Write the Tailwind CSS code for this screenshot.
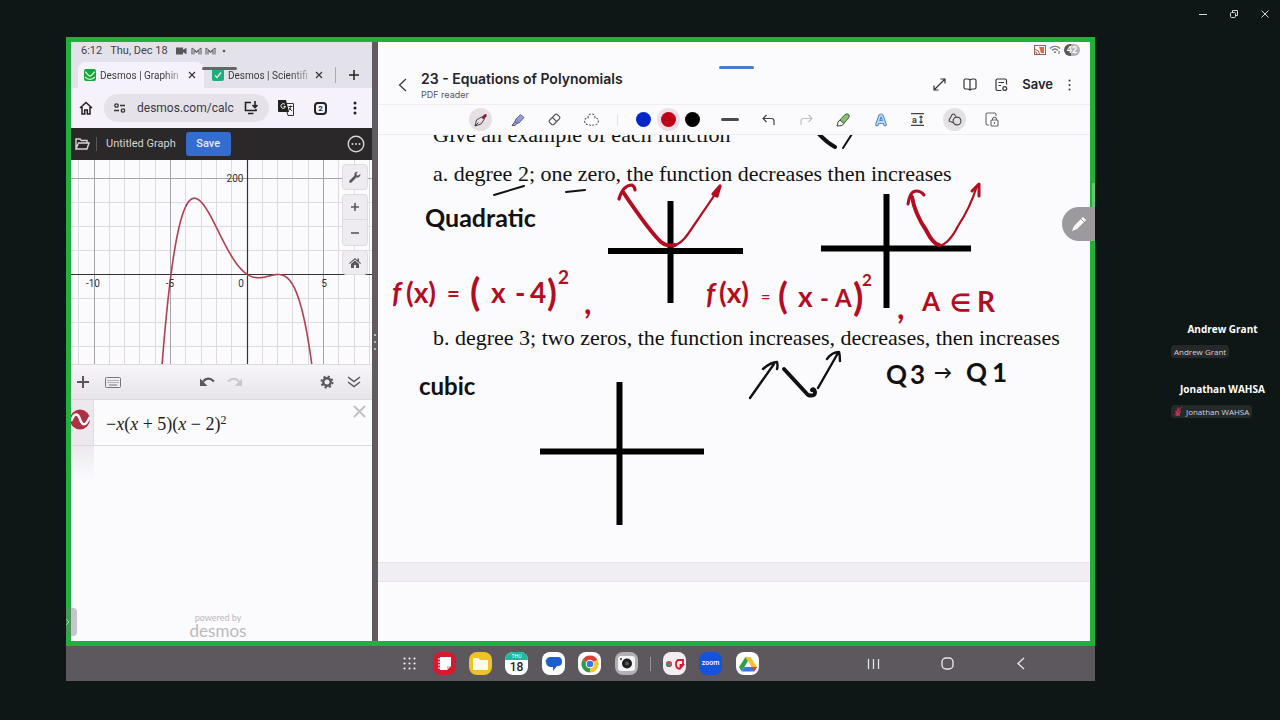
<!DOCTYPE html>
<html lang="en">
<head>
<meta charset="utf-8">
<meta name="viewport" content="width=device-width, initial-scale=1">
<title>Shared screen - Equations of Polynomials</title>
<script src="https://cdn.jsdelivr.net/npm/@tailwindcss/browser@4"></script>
</head>
<body class="min-h-screen flex flex-col bg-[#0f1616] font-['Roboto',sans-serif]">
<header class="h-[37px] shrink-0 flex justify-end text-gray-300">
  <button aria-label="Minimise" class="w-[31px] h-[27px] grid place-items-center"><svg width="10" height="10" fill="none" stroke="currentColor"><path d="M1 5.5h8"/></svg></button>
  <button aria-label="Restore" class="w-[31px] h-[27px] grid place-items-center"><svg width="10" height="10" fill="none" stroke="currentColor"><rect x="1.5" y="3.5" width="5" height="5" rx="1"/><path d="M3.5 3.500V1.500h5v5H7"/></svg></button>
  <button aria-label="Close" class="w-[31px] h-[27px] grid place-items-center"><svg width="10" height="10" fill="none" stroke="currentColor"><path d="M1.500 1.500l7 7M8.500 1.500l-7 7"/></svg></button>
</header>

<div class="grow flex pb-[39px]">
<main class="grow min-w-0 ml-[66px] flex flex-col">
  <div class="relative grow flex border-[5px] border-[#20b13c] bg-[#5f5b60]">

    <!-- Browser pane -->
    <section class="flex-[301] min-w-0 flex flex-col bg-[#fbfafd] overflow-hidden">
      <div class="bg-[#e3e2ea] relative">
        <div class="h-5 flex items-center pl-[10px] pb-[2px] text-[11px] text-[#444348] gap-2">
          <span>6:12</span><span>Thu, Dec 18</span>
          <svg width="54" height="10" viewBox="0 0 54 10" fill="none" stroke="#57565b"><path d="M0 1.500h7v2.300l3.500-2v6.500l-3.500-2v2.200H0z" fill="#57565b" stroke="none"/><path d="M16 8.500V2l4.500 3.500L25 2v6.500M18 8.500V4.500l2.500 2 2.500-2v4M30 8.500V2l4.500 3.500L39 2v6.500M32 8.500V4.500l2.500 2 2.500-2v4" stroke-width="1"/><circle cx="48" cy="5" r="1.300" fill="#57565b" stroke="none"/></svg>
        </div>
        <div class="h-[26px] flex text-[10px] text-[#35343a]">
          <div class="flex-[130] min-w-0 ml-[7px] flex items-center rounded-t-lg bg-[#f5f2fb] pl-[6px] pr-1">
            <svg class="shrink-0" width="12" height="12"><rect width="12" height="12" rx="2" fill="#18a637"/><path d="M1 3c2 0 2 4 5 4s3-4 5-4M1 8c3 3 7 3 10 0" stroke="#c8f5cf" stroke-width="1.300" fill="none"/></svg>
            <span class="ml-1 grow whitespace-nowrap bg-linear-to-r from-[#35343a] from-75% to-[#d5d2da] bg-clip-text text-transparent">Desmos | Graphin</span>
            <button aria-label="Close tab" class="w-4 h-4 shrink-0 grid place-items-center"><svg width="8" height="8" stroke="#35343a" stroke-width="1.200"><path d="M1 1l6 6M7 1l-6 6"/></svg></button>
          </div>
          <div class="flex-[129] min-w-0 flex items-center pl-2 pr-1">
            <svg class="shrink-0" width="12" height="12"><rect width="12" height="12" rx="2" fill="#1fae79"/><path d="M3 6.500l2 2 4-5" stroke="#d6f5e8" stroke-width="1.300" fill="none"/></svg>
            <span class="ml-1 grow whitespace-nowrap bg-linear-to-r from-[#35343a] from-75% to-[#c5c4cc] bg-clip-text text-transparent">Desmos | Scientifi</span>
            <button aria-label="Close tab" class="w-4 h-4 shrink-0 grid place-items-center"><svg width="8" height="8" stroke="#35343a" stroke-width="1.200"><path d="M1 1l6 6M7 1l-6 6"/></svg></button>
          </div>
          <div class="w-px h-4 my-auto ml-1 bg-[#aaa9b0]"></div>
          <button aria-label="New tab" class="w-[36px] grid place-items-center"><svg width="10" height="10" stroke="#222" stroke-width="1.500"><path d="M5 0v10M0 5h10"/></svg></button>
        </div>
        <div class="absolute left-[131px] top-[25px] w-[35px] h-[3px] rounded bg-[#66646a]"></div>
      </div>
      <div class="h-10 shrink-0 flex items-center bg-[#f5f2fb] pl-2 pr-2">
        <button aria-label="Home"><svg width="14" height="14" fill="none" stroke="#222" stroke-width="1.500"><path d="M1 7l6-5.500L13 7M3 6v7h2.700V9h2.600v4H11V6"/></svg></button>
        <div class="grow ml-[11px] h-7 rounded-full bg-[#e5e2ea] flex items-center pl-[10px] pr-[10px]">
          <svg class="shrink-0" width="12" height="10" fill="none" stroke="#333" stroke-width="1.300"><circle cx="2.500" cy="2.500" r="1.700"/><path d="M6 2.500h5M0 7.500h5"/><circle cx="9" cy="7.500" r="1.700"/></svg>
          <label for="url" class="sr-only">Address</label>
          <input id="url" value="desmos.com/calc" class="ml-[11px] grow w-0 min-w-0 bg-transparent text-[12px] text-[#3b3a40] outline-none">
          <svg class="shrink-0" width="15" height="14" fill="none" stroke="#222" stroke-width="1.600"><path d="M7 1.500H1.500v8H12V8M4 12.500h5.500M11 0v6M8.500 4l2.500 2.500L13.500 4"/></svg>
        </div>
        <button aria-label="Translate" class="ml-[9px]"><svg width="16" height="16"><path d="M0 0h8l3 12H1a1 1 0 0 1-1-1z" fill="#222"/><path d="M8.500 3.500H15.500v12H10l-1-3.500" fill="none" stroke="#333"/><path d="M7 4.500a2.300 2.300 0 1 0 .5 2H5.500" stroke="#fff" fill="none"/><path d="M10.500 6.500h4M12.500 5.500v1c0 2-1 3.500-2 4M11 8l3 3" stroke="#333" fill="none"/></svg></button>
        <button aria-label="Tabs open" class="ml-5 size-[13px] shrink-0 rounded-[4px] border-2 border-[#222] text-[8px] leading-[9px] font-bold text-[#222]">2</button>
        <button aria-label="Browser menu" class="ml-[26px] mr-[7px]"><svg width="4" height="14" fill="#222"><circle cx="2" cy="2" r="1.500"/><circle cx="2" cy="7" r="1.500"/><circle cx="2" cy="12" r="1.500"/></svg></button>
      </div>
      <div class="h-8 shrink-0 flex items-center bg-[#2a2829] pl-1 pr-[7px] text-[#d5d4d8]">
        <button aria-label="Open graph"><svg width="15" height="12" fill="none" stroke="#d5d4d8" stroke-width="1.400"><path d="M1 11V1h4l1.500 1.500H12V5M1 11l2.500-6H14l-2 6z"/></svg></button>
        <div class="w-px h-[14px] bg-[#5c5a5d] ml-[6px]"></div>
        <h2 class="ml-[9px] text-[11px] whitespace-nowrap">Untitled Graph</h2>
        <button class="ml-[10px] w-[45px] h-6 rounded-[3px] bg-[#356ccf] text-[11px] font-medium text-[#e6edfa]">Save</button>
        <button aria-label="More" class="ml-auto"><svg width="18" height="18" fill="none" stroke="#d5d4d8" stroke-width="1.400"><circle cx="9" cy="9" r="7.800"/><g fill="#d5d4d8" stroke="none"><circle cx="5.500" cy="9" r="1"/><circle cx="9" cy="9" r="1"/><circle cx="12.500" cy="9" r="1"/></g></svg></button>
      </div>
      <div class="relative shrink-0">
        <svg class="block w-full" viewBox="0 0 301 204" role="img" aria-label="Graph of the quartic">
          <path id="minor" stroke="#dddbe0" fill="none"/>
          <path id="major" stroke="#a5a3a9" fill="none"/>
          <path d="M0 114.500H301M176.500 0V204" stroke="#333" stroke-width="1.200"/>
          <path id="curve" stroke="#b0404d" stroke-width="1.600" fill="none"/>
          <g font-family="Roboto" font-size="10" fill="#333" text-anchor="middle"><text x="164" y="22">200</text><text x="22" y="127">-10</text><text x="99" y="127">-5</text><text x="170" y="127">0</text><text x="253" y="127">5</text></g>
        </svg>
        <div class="absolute right-1 top-1 w-[26px] flex flex-col gap-1 text-[#59585c]">
          <button aria-label="Graph settings" class="h-[26px] rounded border border-[#dddbe0] bg-[#eeecf0] grid place-items-center"><svg width="12" height="12" viewBox="0 0 12 12"><path d="M1.500 10.500l5-5" stroke="#59585c" stroke-width="2.600" stroke-linecap="round"/><path d="M11.300 2.800L9.300 4.500 7.600 4.200 7.400 2.600 9.200.8C7.300.2 5.200 1.500 5.300 3.600c0 2.100 2 3.400 3.800 2.900 1.700-.4 2.700-2 2.200-3.700z" fill="#59585c"/></svg></button>
          <div class="rounded border border-[#dddbe0] bg-[#eeecf0] flex flex-col">
            <button aria-label="Zoom in" class="h-[25px] grid place-items-center border-b border-[#dddbe0]"><svg width="8" height="8" stroke="#59585c" stroke-width="1.600"><path d="M4 0v8M0 4h8"/></svg></button>
            <button aria-label="Zoom out" class="h-[25px] grid place-items-center"><svg width="8" height="8" stroke="#59585c" stroke-width="1.600"><path d="M0 4h8"/></svg></button>
          </div>
          <button aria-label="Default view" class="h-[25px] rounded border border-[#dddbe0] bg-[#eeecf0] grid place-items-center"><svg width="12" height="10" fill="#59585c"><path d="M6 0l2.500 2.200V.5H10v3L12 5.300l-.7.800L6 1.500.700 6.100 0 5.300zM6 2.500L10 6v4H7V7H5v3H2V6z"/></svg></button>
        </div>
      </div>
      <div class="h-9 shrink-0 flex items-center border-t border-b border-[#dddbe0] bg-linear-to-b from-[#f7f5f9] to-[#e6e4e8] pl-[6px] pr-[11px]">
        <button aria-label="Add item"><svg width="12" height="12" stroke="#59585c" stroke-width="2"><path d="M6 0v12M0 6h12"/></svg></button>
        <button aria-label="Keyboard" class="ml-4"><svg width="16" height="11" fill="none" stroke="#77757b"><rect x=".5" y=".5" width="15" height="10" rx="1"/><path d="M2.500 3.500h11M2.500 5.500h11" stroke-dasharray="1 1"/><path d="M4 8h8"/></svg></button>
        <button aria-label="Undo" class="ml-auto"><svg width="16" height="10"><path d="M15 4.500C11 .5 7 1 4 4.500" fill="none" stroke="#59585c" stroke-width="2.200"/><path d="M1 1.500V9h7.500z" fill="#59585c"/></svg></button>
        <button aria-label="Redo" class="ml-3"><svg width="16" height="10"><path d="M1 4.500C5 .5 9 1 12 4.500" fill="none" stroke="#cac8cd" stroke-width="2"/><path d="M15 1.500V9H7.500z" fill="#cac8cd"/></svg></button>
        <button aria-label="Edit list" class="ml-auto"><svg width="14" height="14" fill="none" stroke="#59585c"><circle cx="7" cy="7" r="3.700" stroke-width="2.400"/><circle cx="7" cy="7" r="5.500" stroke-width="2" stroke-dasharray="2.160 2.160"/></svg></button>
        <button aria-label="Hide list" class="ml-[13px]"><svg width="14" height="12" fill="none" stroke="#59585c" stroke-width="1.500"><path d="M1 1l6 4.500L13 1M1 6l6 4.500L13 6"/></svg></button>
      </div>
      <div class="h-[46px] shrink-0 flex border-b border-[#dddbe0]">
        <div class="w-[23px] shrink-0 bg-[#ebe9ed] border-r border-[#e0dee3] pt-[9px]">
          <svg width="20" height="21"><circle cx="9" cy="10.500" r="10" fill="#b02f42"/><path d="M0 12C2 8 3 5 5.500 5.500S8.500 9 9.500 11.500 12 16 14 15 17 11 19 8" stroke="#fff" stroke-width="2.400" fill="none"/></svg>
        </div>
        <p class="pl-3 pt-3 grow font-['Liberation_Serif',serif] text-[18px] leading-6 text-[#222] whitespace-nowrap">−<i>x</i>(<i>x</i> + 5)(<i>x</i> − 2)<sup class="text-[12px]">2</sup></p>
        <button aria-label="Delete expression" class="self-start mt-[5px] mr-[6px]"><svg width="13" height="13" stroke="#c2c0c5" stroke-width="2"><path d="M1 1l11 11M12 1L1 12"/></svg></button>
      </div>
      <div class="relative grow flex flex-col">
        <div class="w-[23px] h-[34px] bg-linear-to-b from-[#ebe9ed] to-[#fbfafd]"></div>
        <div class="mt-auto pr-[7px] pb-[2px] flex flex-col items-center text-[#bbb9be] font-['Lato',sans-serif]">
          <span class="text-[9px] leading-[9px]">powered by</span><span class="text-[17px] leading-[17px]">desmos</span>
        </div>
      </div>
    </section>

    <div class="w-[6px] shrink-0 flex flex-col justify-center items-center gap-[5px]">
      <i class="size-[2px] bg-gray-300 rounded-full"></i><i class="size-[2px] bg-gray-300 rounded-full"></i><i class="size-[2px] bg-gray-300 rounded-full"></i>
    </div>

    <!-- PDF reader pane -->
    <section class="flex-[712] min-w-0 flex flex-col bg-[#fbfafd] overflow-hidden">
      <div class="h-[28px] shrink-0 relative flex justify-end pt-[2px] pr-[10px]">
        <div class="absolute left-1/2 -ml-[15px] top-[24px] w-[35px] h-[3px] rounded bg-[#4c78cf]"></div>
        <div class="flex h-3 items-center gap-[3px]">
          <svg width="12" height="10" fill="none"><rect x=".5" y=".5" width="11" height="9" stroke="#a05e50"/><path d="M5 2h5v6H7z" fill="#dc6a48"/><path d="M1 4.500a5 5 0 0 1 4.500 4.500M1 7a2 2 0 0 1 2 2" stroke="#a05e50"/></svg>
          <svg width="12" height="10" fill="none" stroke="#77757b" stroke-width="1.200"><path d="M1 3.500c3-3 7-3 10 0M3 5.500c2-2 4-2 6 0M5 7.500q1-1 2 0M10 6v3"/></svg>
          <span class="w-[16px] h-3 rounded-full bg-linear-to-r from-[#59585c] from-45% to-[#b5b3b8] to-45% text-white text-[9px] leading-3 font-bold text-center">42</span>
        </div>
      </div>
      <div class="h-[35px] shrink-0 flex items-center border-b border-[#efedf2] pl-5 pr-[19px] pb-[5px] text-[#252429]">
        <button aria-label="Back" class="w-[10px]"><svg width="9" height="14" fill="none" stroke="#333" stroke-width="1.200"><path d="M8 1L1.500 7 8 13"/></svg></button>
        <div class="ml-[13px] pt-1 grow">
          <h1 class="font-['Inter',sans-serif] text-[14px] leading-4 font-semibold">23 - Equations of Polynomials</h1>
          <p class="font-['Inter',sans-serif] text-[9px] leading-4 text-[#55545a]">PDF reader</p>
        </div>
        <div class="flex items-center">
          <button aria-label="Full screen"><svg width="13" height="13" fill="none" stroke="#333" stroke-width="1.200"><path d="M1 12L12 1M7.500 1H12v4.500M1 7.500V12h4.500"/></svg></button>
          <button aria-label="Page view" class="ml-[17px]"><svg width="14" height="13" fill="none" stroke="#333" stroke-width="1.200"><path d="M7 2v9.500M7 2Q6 1 4 1H2.500Q1 1 1 2.500v7Q1 11 2.500 11H4q2 0 3 1 1-1 3-1h1.500Q13 11 13 9.500v-7Q13 1 11.500 1H10Q8 1 7 2z"/></svg></button>
          <button aria-label="Page settings" class="ml-[18px]"><svg width="13" height="14" fill="none" stroke="#333" stroke-width="1.200"><path d="M11.500 6.500v-4Q11.500 1 10 1H2.500Q1 1 1 2.500v8Q1 12.500 2.500 12.500h4M3.500 4.500H9M3.500 7.500H6"/><circle cx="9.800" cy="10.500" r="1.900"/></svg></button>
          <button class="ml-[14px] font-['Inter',sans-serif] text-[13px] font-semibold">Save</button>
          <button aria-label="More options" class="ml-[15px]"><svg width="3" height="12" fill="#333"><circle cx="1.500" cy="1.500" r="1"/><circle cx="1.500" cy="6" r="1"/><circle cx="1.500" cy="10.500" r="1"/></svg></button>
        </div>
      </div>
      <div class="h-[30px] shrink-0 flex items-center justify-center pl-1 border-b border-[#efedf2]">
        <button aria-label="Pen" class="w-[37px] grid place-items-center"><span class="size-[23px] rounded-full bg-[#e6e0e5] grid place-items-center"><svg width="14" height="14" viewBox="0 0 14 14"><path d="M7.500 4l3-2.600q2.500-1 2.200 1.600L10 6.500z" fill="#8c1930"/><path d="M1 13l1.500-6L7.500 4 10 6.500 7 11zM1 13l3.500-3.500" fill="none" stroke="#444"/></svg></span></button>
        <button aria-label="Highlighter" class="w-[37px] grid place-items-center"><svg width="14" height="14"><path d="M5 6l4.500-4.500 3.500 3L8.500 9.500z" fill="#929bdb" stroke="#666b96"/><path d="M5 6L4 8.500 6 10.500l2.500-1M4 8.500L1 12.500h3l2-2" fill="#8ba0d8" stroke="#555"/></svg></button>
        <button aria-label="Eraser" class="w-[37px] grid place-items-center"><svg width="13" height="13" fill="none" stroke="#55545a" stroke-width="1.100"><rect x="1" y="3.500" width="11" height="6" rx="1.800" transform="rotate(-45 6.500 6.500)"/><path d="M4.500 4.500l4 4"/></svg></button>
        <button aria-label="Lasso" class="w-[37px] grid place-items-center"><svg width="15" height="14" fill="none" stroke="#55545a" stroke-width="1.100" stroke-dasharray="2 1.300"><path d="M4 5q0-4 3.500-4T11 5q3.500 0 3.300 3.500-.4 3.500-4 3Q7.500 13.500 5 11.500q-4 .5-4.300-3Q.5 5 4 5z"/></svg></button>
        <span class="w-[14px] flex justify-center"><span class="w-px h-3 bg-[#e3e1e6]"></span></span>
        <button aria-label="Blue" class="ml-[7px] w-[25px] grid place-items-center"><span class="size-[15px] rounded-full bg-[#0726c7]"></span></button>
        <button aria-label="Red" class="w-6 grid place-items-center"><span class="size-[23px] rounded-full bg-[#eedfe6] grid place-items-center"><span class="size-[15px] rounded-full bg-[#c00018]"></span></span></button>
        <button aria-label="Black" class="w-[25px] grid place-items-center"><span class="size-[15px] rounded-full bg-black"></span></button>
        <button aria-label="Line width" class="ml-[6px] w-[38px] grid place-items-center"><span class="w-[18px] h-[3px] rounded bg-[#4a494e]"></span></button>
        <button aria-label="Undo ink" class="w-[38px] grid place-items-center"><svg width="13" height="12" fill="none" stroke="#444" stroke-width="1.200"><path d="M4.500 1L1 4.500 4.500 8M1 4.500h8.500Q12 4.500 12 7v4"/></svg></button>
        <button aria-label="Redo ink" class="w-[38px] grid place-items-center"><svg width="13" height="12" fill="none" stroke="#c2c0c5" stroke-width="1.200"><path d="M8.500 1L12 4.500 8.500 8M12 4.500H3.500Q1 4.500 1 7v4"/></svg></button>
        <button aria-label="Quick highlighter" class="w-[37px] grid place-items-center"><svg width="15" height="14"><path d="M2 9l7-7.500q2.500-1.500 4 .5.800 1.500-.5 3L6 12.500z" fill="#83c765" stroke="#4a5a44"/><path d="M1 13l1-4 2-2 4 3.500-2 2z" fill="#f4f4f4" stroke="#444"/></svg></button>
        <button aria-label="Text style" class="w-[37px] grid place-items-center"><svg width="14" height="14" fill="none" stroke-linecap="round" stroke-linejoin="round"><path d="M3 11.500L6 3q1-1.500 2 0l3 8.500M4.500 9h5" stroke="#3f78bd" stroke-width="3.600"/><path d="M3 11.500L6 3q1-1.500 2 0l3 8.500M4.500 9h5" stroke="#bcd7f8" stroke-width="1.800"/></svg></button>
        <button aria-label="Text spacing" class="w-[37px] grid place-items-center"><svg width="13" height="13" fill="none" stroke="#444" stroke-width="1.100"><path d="M0 .6h13M0 12.400h13M10 3v7M8.500 4.500L10 3l1.500 1.500M8.500 8.500L10 10l1.500-1.500"/><text x="1" y="9.500" font-size="9" font-weight="700" fill="#444" stroke="none">a</text></svg></button>
        <button aria-label="Shapes" class="w-[37px] grid place-items-center"><span class="size-[23px] rounded-full bg-[#e3e1e5] grid place-items-center"><svg width="14" height="13" fill="none" stroke="#444" stroke-width="1.100"><circle cx="9" cy="8" r="3.900"/><path d="M5 9.500L2 8.500q-1.200-.5-.8-1.700L4 1.700Q5 .5 6.300 1.300L8 3.500"/></svg></span></button>
        <button aria-label="Lock canvas" class="w-[37px] grid place-items-center"><svg width="14" height="15" fill="none" stroke="#66656a" stroke-width="1.100"><path d="M11 4V2.500Q11 1 9.500 1h-7Q1 1 1 2.500v9Q1 13 2.500 13H4"/><rect x="6" y="8" width="7" height="6" rx="1"/><path d="M7.500 8V6.500q2-2.500 4 0V8M9.500 10v2"/></svg></button>
      </div>

      <!-- Document page: printed text with ink on top -->
      <div class="relative grow pt-[1px] overflow-hidden">
        <div class="pl-[55px] font-['Liberation_Serif',serif] text-[22px] leading-6 text-[#111] whitespace-nowrap">
          <p class="-mt-[13px]">Give an example of each function</p>
          <p class="mt-[15px]">a. degree 2; one zero, the function decreases then increases</p>
          <p class="mt-[140px]">b. degree 3; two zeros, the function increases, decreases, then increases</p>
        </div>
        <div class="mt-[212px] h-5 bg-[#f0eef2] border-y border-[#e7e5e9]"></div>
        <svg class="absolute inset-x-0 top-0 w-full" viewBox="378 135 712 506" fill="none" stroke-linecap="round" stroke-linejoin="round">
          <g stroke="#000" stroke-width="6" stroke-linecap="butt"><path d="M608 251H743M670.500 201V303M821 248.500H971M886.500 194V308M540 451.500H704M619.500 382V525"/></g>
          <g stroke="#111" stroke-width="2">
            <path d="M494 195l30-9M566 192l19-2M843 148l9-14"/>
            <path d="M818 133q8 9 17 14" stroke-width="4"/>
            <path d="M750 398l24-34M763 369q8-7 14-7 1 4 0 7M818 388l20-35M827 359q5-7 12-7 1 3 1 9" stroke-width="2.400"/>
            <path d="M784 369l24 26q7 2 7-3-1-4-3-2" stroke-width="4"/>
          </g>
          <g stroke="#b30d22">
            <path d="M623 192Q650 232 661 242q6 5 14 3" stroke-width="4"/>
            <path d="M673 246q8-2 15-12L718 190" stroke-width="2.200"/>
            <path d="M619 199q4-14 13-14 3 2 3 5M713 194l7-8-3 10z" stroke-width="3.200"/>
            <path d="M912 197q3 17 14 33 7 14 13 15" stroke-width="4"/>
            <path d="M939 246q10-2 19-20 12-18 19-40" stroke-width="2.200"/>
            <path d="M908 204q2-13 8-13 5 0 8 4M972 191l7-7 0 12" stroke-width="3"/>
          </g>
          <g font-family="Lato, sans-serif" font-weight="700" fill="#111">
            <text x="425" y="227" font-size="25">Quadratic</text>
            <text x="419" y="395" font-size="24">cubic</text>
            <text x="886" y="384" font-size="26">Q</text><text x="910" y="384" font-size="26">3</text><text x="934" y="379" font-size="18">→</text><text x="966" y="382" font-size="26">Q</text><text x="992" y="382" font-size="26">1</text>
          </g>
          <g font-family="Lato, sans-serif" font-weight="700" fill="#b30d22">
            <text x="392" y="303" font-size="28" font-style="italic">f</text><text x="406" y="303" font-size="28">(x)</text><text x="447" y="302" font-size="22">=</text>
            <text x="470" y="306" font-size="38">(</text><text x="491" y="303" font-size="28">x</text><text x="515" y="303" font-size="28">-</text><text x="530" y="303" font-size="28">4</text><text x="547" y="306" font-size="36">)</text><text x="558" y="284" font-size="19">2</text>
            <text x="584" y="314" font-size="32">,</text>
            <text x="706" y="304" font-size="28" font-style="italic">f</text><text x="719" y="303" font-size="28">(x)</text><text x="761" y="302" font-size="16">=</text>
            <text x="778" y="309" font-size="36">(</text><text x="798" y="307" font-size="28">x</text><text x="820" y="307" font-size="24">-</text><text x="835" y="307" font-size="24">A</text><text x="853" y="311" font-size="38">)</text><text x="862" y="286" font-size="17">2</text>
            <text x="897" y="319" font-size="32">,</text>
            <text x="922" y="311" font-size="26">A</text><text x="950" y="311" font-size="24">∈</text><text x="977" y="312" font-size="28">R</text>
          </g>
        </svg>
      </div>
    </section>

    <button aria-label="Pen tools" class="absolute -right-[5px] top-[165px] w-[33px] h-[34px] rounded-l-full bg-[#9c9a9e] grid place-items-center"><svg width="18" height="18"><path d="M2 16l2-5L13 2l3 3-9 9z" fill="#fff"/><path d="M11 4l3 3" stroke="#9c9a9e"/></svg></button>
    <div class="absolute -right-[5px] top-[141px] w-[3px] h-6 bg-[#5dcb75]"></div>
    <button aria-label="Open edge panel" class="absolute -left-[5px] bottom-[5px] w-[11px] h-7 rounded-r bg-[#77757b]/40 flex items-center"><svg width="5" height="8" fill="none" stroke="#8be09c"><path d="M0 1l3 3-3 3"/></svg></button>
  </div>

  <!-- Tablet task bar -->
  <nav class="h-[35px] shrink-0 bg-[#5c585d] flex items-center justify-end pr-[69px]">
    <button aria-label="All apps" class="size-[23px] grid place-items-center"><svg width="13" height="13" viewBox="0 0 13 13" stroke="#f0eff2" stroke-width="2.200" stroke-linecap="round"><path d="M1.500 1.500h0M6.500 1.500h0M11.500 1.500h0M1.500 6.500h0M6.500 6.500h0M11.500 6.500h0M1.500 11.500h0M6.500 11.500h0M11.500 11.500h0"/></svg></button>
    <button aria-label="Notes" class="ml-3 size-[23px] rounded-lg bg-[#d6192f] grid place-items-center"><svg width="14" height="15"><path d="M2 1h11v9l-4 4H2z" fill="#fff"/><path d="M9 14v-4h4" fill="#f2b8be"/><path d="M0 3h3M0 6h3M0 9h3M0 12h3" stroke="#fff"/></svg></button>
    <button aria-label="My files" class="ml-[13px] size-[23px] rounded-lg bg-[#eec325] grid place-items-center"><svg width="15" height="12"><path d="M0 1q0-1 1-1h4l2 2h7q1 0 1 1v8q0 1-1 1H1q-1 0-1-1z" fill="#fffbe8"/></svg></button>
    <button aria-label="Calendar" class="ml-[13px] size-[23px] rounded-lg bg-white overflow-hidden flex flex-col text-center"><span class="h-2 w-full bg-[#20b89c] text-[5px] leading-[8px] text-white">THU</span><span class="w-full text-[12px] leading-[14px] font-medium text-[#222]">18</span></button>
    <button aria-label="Messages" class="ml-[14px] size-[23px] rounded-lg bg-white grid place-items-center"><svg width="17" height="16"><path d="M5 1h8q4 0 4 4.500T13 10h-1l-4 5v-4H5Q1 10 1 5.500H0Q2 3.500 1.500 3 3 1 5 1z" fill="#1d5fcc"/></svg></button>
    <button aria-label="Chrome" class="ml-[13px] size-[23px] rounded-lg bg-white grid place-items-center"><svg width="18" height="18" viewBox="-9 -9 18 18"><path d="M0 0L-7.400-4.250A8.500 8.500 0 0 1 7.400-4.250z" fill="#dc4034"/><path d="M0 0L7.400-4.250A8.500 8.500 0 0 1 0 8.500z" fill="#f5c32c"/><path d="M0 0L0 8.500A8.500 8.500 0 0 1-7.400-4.250z" fill="#2e9c4e"/><circle r="4.300" fill="#fff"/><circle r="3.300" fill="#3878e0"/></svg></button>
    <button aria-label="Camera" class="ml-[14px] size-[23px] rounded-lg bg-[#b2afb5] grid place-items-center"><svg width="17" height="15"><rect width="17" height="15" rx="3" fill="#f5f4f6"/><circle cx="9" cy="7.500" r="5" fill="#1e1e22"/><circle cx="9" cy="7.500" r="2" fill="#555"/><circle cx="3" cy="3" r="1" fill="#333"/></svg></button>
    <span class="ml-3 w-px h-[14px] bg-[#9a979c]"></span>
    <button aria-label="Split view pair" class="ml-3 size-[23px] rounded-lg bg-[#f3eff1] grid place-items-center"><svg width="20" height="12" fill="none"><circle cx="4" cy="6" r="2.200" stroke="#c9443a" stroke-width="1.800"/><path d="M4 8.200A2.200 2.200 0 0 1 2 5" stroke="#2e9c4e" stroke-width="1.800"/><circle cx="4" cy="6" r="1.200" fill="#3878e0"/><path d="M15 10.500h-1.500q-2.500-.5-2.500-4.500t3-4h4v5M15.500 7v3l2.500-3z" stroke="#d6192f" stroke-width="1.800"/></svg></button>
    <button aria-label="Zoom" class="ml-[13px] size-[23px] rounded-lg bg-[#1454dd] text-white text-[7px] font-medium leading-none">zoom</button>
    <button aria-label="Drive" class="ml-[14px] size-[23px] rounded-lg bg-white grid place-items-center"><svg width="18" height="16" viewBox="0 0 18 16"><path d="M6.500 1L0 11l2.700 4.500L9 5z" fill="#2f9e4f"/><path d="M6.500 1h5L18 11h-5.500z" fill="#f5c32c"/><path d="M5.500 11H18l-2.700 4.500H2.700z" fill="#3878e0"/><path d="M12.500 11H18l-2.700 4.500z" fill="#d8483c"/></svg></button>
    <button aria-label="Recent apps" class="ml-[108px] w-[13px]"><svg width="13" height="12" stroke="#e5e4e7" stroke-width="1.300"><path d="M1.500 1v10M6.500 1v10M11.500 1v10"/></svg></button>
    <button aria-label="Home screen" class="ml-[61px]"><svg width="13" height="13" fill="none" stroke="#e5e4e7" stroke-width="1.400"><rect x="1" y="1" width="11" height="11" rx="4"/></svg></button>
    <button aria-label="Navigate back" class="ml-[62px]"><svg width="10" height="13" fill="none" stroke="#e5e4e7" stroke-width="1.400"><path d="M8 1L2 6.500 8 12"/></svg></button>
  </nav>
</main>

<!-- Call participants -->
<aside class="w-[185px] shrink-0 pl-[76px] pr-[6px] flex flex-col justify-center gap-[23px] font-['Open_Sans',sans-serif]">
  <div class="flex flex-col pt-5">
    <p class="text-center text-[10px] leading-4 font-bold text-white whitespace-nowrap">Andrew Grant</p>
    <span class="mt-2 self-start rounded bg-[#25292b] px-[3px] text-[8px] leading-[13px] text-gray-300 whitespace-nowrap">Andrew Grant</span>
  </div>
  <div class="flex flex-col">
    <p class="text-center text-[10px] leading-4 font-bold text-white whitespace-nowrap">Jonathan WAHSA</p>
    <span class="mt-2 self-start flex items-center gap-1 rounded bg-[#25292b] px-[3px] text-[8px] leading-[13px] text-gray-300 whitespace-nowrap"><svg width="8" height="10" fill="none" stroke="#cf3550"><path d="M4 1.500v4M2 4.500q0 3 2 3t2-3M4 7.500V9M2 9h4" stroke-width="1.300"/><path d="M7.500 1L.5 9.500"/></svg>Jonathan WAHSA</span>
  </div>
</aside>
</div>

<script>
  // Grid and curve of y = -x(x+5)(x-2)^2, with the origin at (176.5, 114.5)
  const X = x => 176.5 + 15.3 * x, Y = y => 114.5 - 0.48 * y;
  let minor = '', major = '', curve = '';
  for (let i = -11; i <= 8; i++) {
    const d = `M${Math.round(X(i)) - .5} 0V204`;
    if (i % 5) minor += d; else major += d;
  }
  for (let j = -150; j <= 200; j += 50) {
    const d = `M0 ${Math.round(Y(j)) - .5}H301`;
    if (j % 200) minor += d; else major += d;
  }
  for (let x = -5.7; x <= 4.4; x += 0.05) curve += (curve ? 'L' : 'M') + X(x).toFixed(2) + ' ' + Y(-x * (x + 5) * (x - 2) ** 2).toFixed(2);
  document.getElementById('minor').setAttribute('d', minor);
  document.getElementById('major').setAttribute('d', major);
  document.getElementById('curve').setAttribute('d', curve);
</script>
</body>
</html>
